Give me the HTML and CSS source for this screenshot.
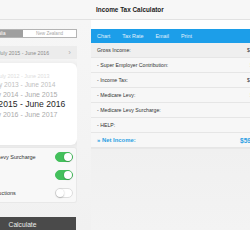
FILE: index.html
```html
<!DOCTYPE html>
<html lang="en">
<head>
    <meta charset="UTF-8">
    <meta name="viewport" content="width=device-width, initial-scale=1.0">
    <title>Income Tax Calculator</title>
    <link rel="stylesheet" href="styles.css">
</head>
<body>
    <header class="topbar">
        <h1 class="title">Income Tax Calculator</h1>
    </header>

    <div class="main">
        <aside class="sidebar">
            <div class="sidebar-inner">
                <div class="segmented">
                    <span class="seg seg-on">Australia</span>
                    <span class="seg">New Zealand</span>
                </div>

                <div class="year-row">
                    <span>July 2015 - June 2016</span>
                    <span class="chevron">&rsaquo;</span>
                </div>

                <div class="picker">
                    <div class="pick pick-far">July 2012 - June 2013</div>
                    <div class="pick pick-mid">July 2013 - June 2014</div>
                    <div class="pick pick-near">July 2014 - June 2015</div>
                    <div class="pick pick-on">July 2015 - June 2016</div>
                    <div class="pick pick-near">July 2016 - June 2017</div>
                </div>

                <div class="options">
                    <div class="option">
                        <span>Medicare Levy Surcharge</span>
                        <span class="switch on"></span>
                    </div>
                    <div class="option">
                        <span>HELP</span>
                        <span class="switch on"></span>
                    </div>
                    <div class="option">
                        <span>Other Deductions</span>
                        <span class="switch"></span>
                    </div>
                </div>

                <button class="calc" type="button">Calculate</button>
            </div>
        </aside>

        <section class="results">
            <nav class="tabs">
                <span class="tab">Chart</span>
                <span class="tab">Tax Rate</span>
                <span class="tab">Email</span>
                <span class="tab">Print</span>
            </nav>

            <div class="row row-gross"><span>Gross Income:</span><span>$80,000.00</span></div>
            <div class="row"><span>- Super Employer Contribution:</span><span>$7,600.00</span></div>
            <div class="row"><span>- Income Tax:</span><span>$17,547.00</span></div>
            <div class="row"><span>- Medicare Levy:</span><span>$1,600.00</span></div>
            <div class="row"><span>- Medicare Levy Surcharge:</span><span>$0.00</span></div>
            <div class="row"><span>- HELP:</span><span>$0.00</span></div>
            <div class="row row-net"><span>&raquo; Net Income:</span><span class="net-value">$59,253.00</span></div>

            <div class="chart"></div>
        </section>
    </div>
</body>
</html>
```

FILE: styles.css
```css
/* Pagina base */
body {
    margin: 0;
    width: 250px;
    height: 250px;
    overflow: hidden;
    background-color: #ffffff;
    font-family: "Liberation Sans", Arial, sans-serif;
    color: #333333;
}

/* Barra superior con el titulo */
.topbar {
    height: 19px;
    display: flex;
    align-items: center;
    background-color: #f7f7f7;
    border-bottom: 1px solid #e2e2e2;
}

.title {
    margin: 0 0 0 96px;
    font-size: 6.4px;
    font-weight: bold;
    color: #222222;
}

.main {
    display: flex;
    height: 210px;
    background: linear-gradient(to bottom, #f6f6f6, #f1f1f1);
}

/* Columna izquierda (recortada por el borde) */
.sidebar {
    width: 77px;
    flex: none;
    overflow: hidden;
}

.sidebar-inner {
    width: 108px;
    margin-left: -31px;
    padding-top: 9px;
}

.segmented {
    display: flex;
    height: 9px;
    box-sizing: border-box;
    border: 1px solid #b4b4b4;
    font-size: 4.6px;
}

.seg {
    flex: 1;
    display: flex;
    align-items: center;
    justify-content: center;
    background-color: #ffffff;
    color: #a8a8a8;
}

.seg-on {
    background-color: #9f9f9f;
    color: #ffffff;
}

.year-row {
    margin-top: 8px;
    height: 13px;
    display: flex;
    align-items: center;
    justify-content: space-between;
    padding: 0 6px 0 29px;
    background-color: #ececec;
    font-size: 5.2px;
    color: #8a8a8a;
}

.chevron {
    font-size: 8px;
    color: #b0b0b0;
}

.picker {
    margin-top: 4px;
    height: 82px;
    box-sizing: border-box;
    padding-top: 9px;
    background-color: #ffffff;
    border-radius: 0 6px 6px 0;
    box-shadow: 2px 1px 6px rgba(0, 0, 0, 0.08);
    text-align: center;
}

.pick {
    display: flex;
    align-items: center;
    justify-content: center;
    white-space: nowrap;
}

.pick-far {
    height: 8px;
    font-size: 5.4px;
    color: #dddddd;
}

.pick-mid {
    height: 9px;
    font-size: 6.6px;
    color: #bebebe;
}

.pick-near {
    height: 10px;
    font-size: 7px;
    color: #ababab;
}

.pick-on {
    height: 10px;
    font-size: 8.6px;
    color: #1f1f1f;
}

.options {
    margin-top: 2px;
    background-color: #f8f8f8;
    border: 1px solid #e8e8e8;
    border-left: none;
    border-radius: 0 3px 3px 0;
}

.option {
    height: 18px;
    display: flex;
    align-items: center;
    justify-content: space-between;
    padding: 0 3px 0 4px;
    font-size: 5.5px;
    color: #333333;
}

.switch {
    width: 18px;
    height: 10px;
    box-sizing: border-box;
    border-radius: 5px;
    border: 1px solid #dddddd;
    background-color: #ffffff;
    position: relative;
}

.switch::after {
    content: "";
    position: absolute;
    top: 0;
    left: 0;
    width: 8px;
    height: 8px;
    border-radius: 50%;
    background-color: #ffffff;
    box-shadow: 0 0.5px 1.5px rgba(0, 0, 0, 0.35);
}

.switch.on {
    border-color: #44c05c;
    background-color: #44c05c;
}

.switch.on::after {
    left: 8px;
}

.calc {
    display: block;
    margin-top: 14px;
    width: 107px;
    height: 14px;
    padding: 0;
    border: none;
    background-color: #4a4a4a;
    color: #eeeeee;
    font-family: inherit;
    font-size: 6.7px;
}

/* Columna derecha con resultados */
.results {
    width: 191px;
    flex: none;
    margin-left: 14px;
    padding-top: 9px;
    box-sizing: border-box;
    padding-right: 9px;
    background-color: #ffffff;
}

.tabs {
    display: flex;
    height: 14px;
    align-items: center;
    background-color: #1c9ee9;
    margin-right: -9px;
}

.tab {
    padding: 0 6px;
    font-size: 5.4px;
    color: #e2f2fc;
}

.row {
    height: 15px;
    box-sizing: border-box;
    display: flex;
    align-items: center;
    justify-content: space-between;
    padding-left: 6px;
    background-color: #f7f7f7;
    border-bottom: 1px solid #e6e6e6;
    font-size: 5.2px;
    color: #333333;
}

.row-gross {
    background-color: #efefef;
}

.row-net {
    color: #2b9fe3;
    font-weight: bold;
    font-size: 5.9px;
}

.net-value {
    font-size: 6.6px;
}

.chart {
    height: 81px;
    margin-right: -9px;
    background: linear-gradient(to bottom, #f0f0f0, #f3f3f3);
    border-top: 1px solid #e8e8e8;
}
```
